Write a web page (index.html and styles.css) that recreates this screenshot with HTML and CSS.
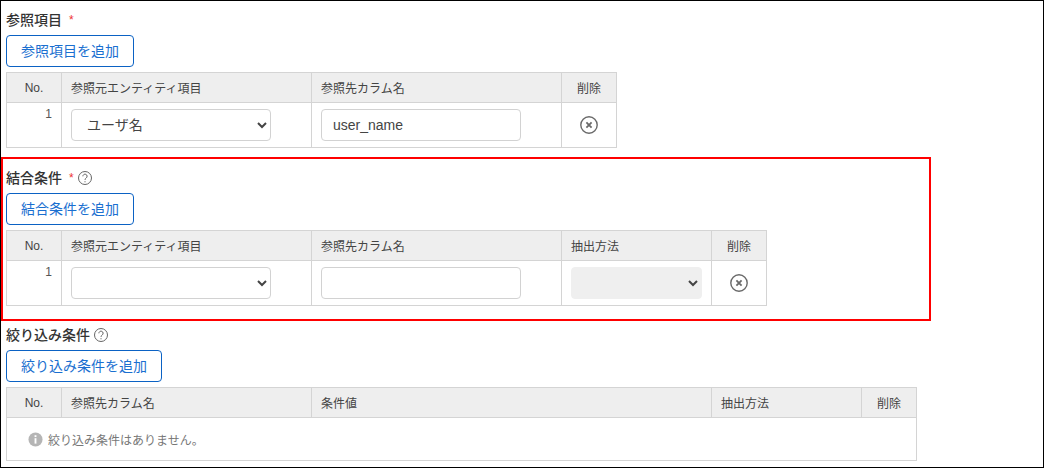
FILE: index.html
```html
<!DOCTYPE html>
<html lang="ja">
<head>
<meta charset="utf-8">
<title>参照項目</title>
<link rel="stylesheet" href="styles.css">
</head>
<body>
<div class="frame">
  <section class="section first">
    <div class="heading"><span class="label">参照項目</span><span class="req">*</span></div>
    <button class="add" type="button">参照項目を追加</button>
    <table class="grid">
      <thead><tr><th class="c-no">No.</th><th class="c-wide">参照元エンティティ項目</th><th class="c-wide">参照先カラム名</th><th class="c-del">削除</th></tr></thead>
      <tbody><tr>
        <td class="num">1</td>
        <td><select class="field sel"><option>ユーザ名</option></select></td>
        <td><input class="field inp" type="text" value="user_name"></td>
        <td class="del"><svg class="x" viewBox="0 0 20 20"><circle cx="10" cy="10" r="8.2"/><path d="M7.4 7.4l5.2 5.2M12.6 7.4l-5.2 5.2"/></svg></td>
      </tr></tbody>
    </table>
  </section>
  <section class="section second">
    <div class="heading"><span class="label">結合条件</span><span class="req">*</span><svg class="help" viewBox="0 0 16 16"><circle cx="8" cy="8" r="6.5"/><path d="M5.9 6.3a2.1 2.1 0 1 1 3.4 1.6c-.8.6-1.3 1-1.3 2"/><path d="M8 11.2v1.1"/></svg></div>
    <button class="add" type="button">結合条件を追加</button>
    <table class="grid">
      <thead><tr><th class="c-no">No.</th><th class="c-wide">参照元エンティティ項目</th><th class="c-wide">参照先カラム名</th><th class="c-mid">抽出方法</th><th class="c-del">削除</th></tr></thead>
      <tbody><tr>
        <td class="num">1</td>
        <td><select class="field sel"><option></option></select></td>
        <td><input class="field inp" type="text"></td>
        <td><select class="field sel narrow" disabled><option></option></select></td>
        <td class="del"><svg class="x" viewBox="0 0 20 20"><circle cx="10" cy="10" r="8.2"/><path d="M7.4 7.4l5.2 5.2M12.6 7.4l-5.2 5.2"/></svg></td>
      </tr></tbody>
    </table>
  </section>
  <section class="section third">
    <div class="heading"><span class="label">絞り込み条件</span><svg class="help" viewBox="0 0 16 16"><circle cx="8" cy="8" r="6.5"/><path d="M5.9 6.3a2.1 2.1 0 1 1 3.4 1.6c-.8.6-1.3 1-1.3 2"/><path d="M8 11.2v1.1"/></svg></div>
    <button class="add" type="button">絞り込み条件を追加</button>
    <table class="grid">
      <thead><tr><th class="c-no">No.</th><th class="c-wide">参照先カラム名</th><th class="c-cond">条件値</th><th class="c-mid">抽出方法</th><th class="c-del">削除</th></tr></thead>
      <tbody><tr><td class="empty" colspan="5"><span class="empty-in"><svg class="info" viewBox="0 0 16 16"><circle cx="8" cy="8" r="7.5"/><rect x="7" y="3.4" width="2" height="2"/><rect x="7" y="6.6" width="2" height="5.8"/></svg>絞り込み条件はありません。</span></td></tr></tbody>
    </table>
  </section>
  <div class="redbox"></div>
</div>
</body>
</html>
```
FILE: styles.css
```css
* { box-sizing: border-box; }
html, body { margin: 0; padding: 0; background: #fff; }
body { font-family: "Liberation Sans", "Noto Sans CJK JP", sans-serif; color: #333; }
.frame {
  position: relative;
  width: 1044px;
  height: 468px;
  border: 1px solid #000;
  padding: 0 5px;
  overflow: hidden;
}
.section { display: flow-root; }
.first { padding-top: 9px; }
.second { padding-top: 20px; }
.third { padding-top: 19px; }
.heading {
  display: flex;
  align-items: center;
  height: 20px;
  margin-bottom: 5px;
  font-size: 14px;
  line-height: 20px;
  color: #333;
}
.label { font-weight: 500; white-space: nowrap; }
.req { color: #e33; font-size: 12px; font-weight: 400; margin-left: 7px; }
.help { width: 16px; height: 16px; margin-left: 3px; fill: none; stroke: #666; stroke-width: 1; }
.add {
  display: block;
  height: 32px;
  padding: 0 14px;
  background: #fff;
  border: 1px solid #0b62c4;
  border-radius: 4px;
  color: #1a6fd0;
  font: inherit;
  font-size: 14px;
  line-height: 30px;
}
.grid {
  margin-top: 5px;
  border-collapse: collapse;
  table-layout: fixed;
  font-size: 12px;
}
.grid th, .grid td { border: 1px solid #d4d4d4; }
.grid th {
  height: 30px;
  padding: 0 9px;
  background: #eee;
  color: #444;
  font-weight: 400;
  text-align: left;
}
.grid th.c-no, .grid th.c-del { text-align: center; padding: 0; }
.c-no { width: 55px; }
.c-wide { width: 250px; }
.c-cond { width: 400px; }
.c-mid { width: 150px; }
.c-del { width: 55px; }
.grid td { height: 45px; padding: 6px 9px; background: #fff; }
.grid td.num { vertical-align: top; text-align: right; padding: 3px 9px 0 0; color: #555; line-height: 16px; }
.grid td.del { padding: 0; text-align: center; vertical-align: middle; }
.x { display: block; width: 20px; height: 20px; margin: 0 auto; fill: none; stroke: #6a6a6a; stroke-width: 1.4; }
.x path { stroke-width: 1.8; }
.field {
  display: block;
  width: 200px;
  height: 32px;
  border: 1px solid #d2d2d2;
  border-radius: 4px;
  background-color: #fff;
  color: #444;
  font: inherit;
  font-size: 14px;
  outline: none;
}
.sel { padding: 0 11px; }
.inp { padding: 0 11px; }
.narrow { width: 131px; background-color: #efefef; border-color: #efefef; opacity: 1; }
.grid td.empty { height: 43px; padding: 0 21px; color: #777; }
.empty-in { display: flex; align-items: center; gap: 5px; }
.info { width: 15px; height: 15px; fill: #b5b5b5; flex: none; }
.info rect { fill: #fff; }
.redbox {
  position: absolute;
  left: 0;
  top: 156px;
  width: 930px;
  height: 164px;
  border: 2px solid #f00;
  pointer-events: none;
}
```
